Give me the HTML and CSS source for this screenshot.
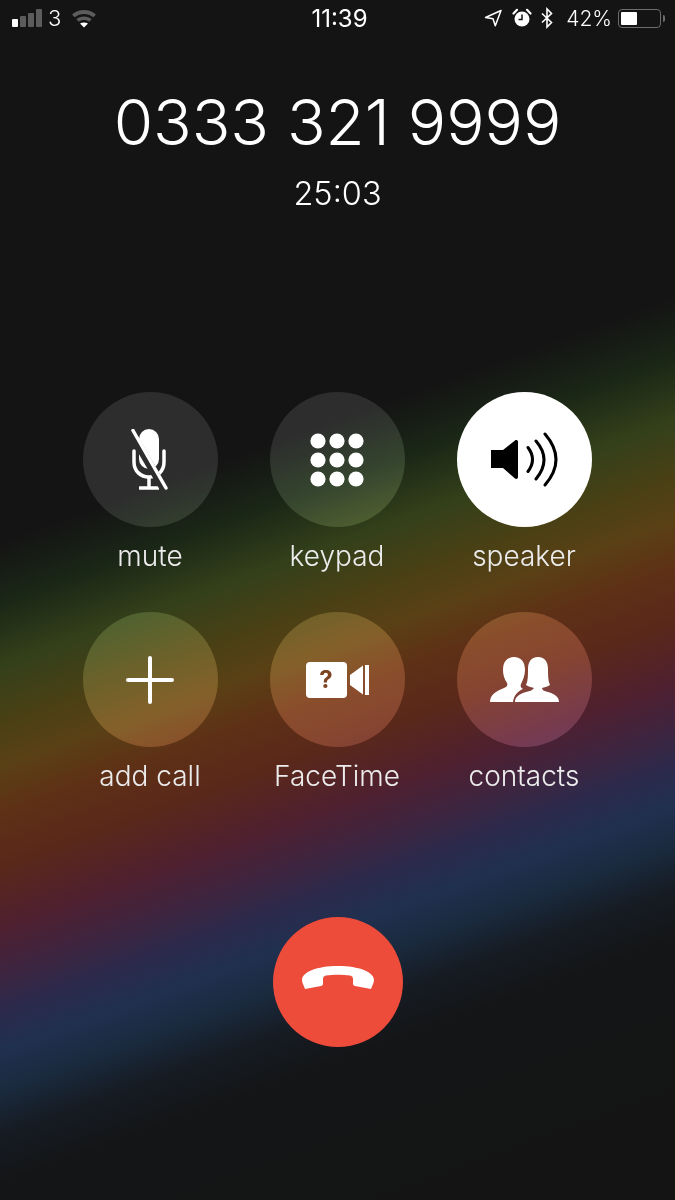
FILE: index.html
```html
<!DOCTYPE html>
<html>
<head>
  <title>Call</title>
  <link rel="stylesheet" href="styles.css">
</head>
<body>
  <div class="status-bar">
    <div class="status-left">
      <div class="signal">
        <span class="bar on b1"></span>
        <span class="bar b2"></span>
        <span class="bar b3"></span>
        <span class="bar b4"></span>
      </div>
      <span class="carrier">3</span>
      <svg class="wifi" width="26" height="20" viewBox="0 0 26 20">
        <path d="M1 6.500C8 .6 18 .6 25 6.500l-2.600 2.800C16.800 4.800 9.200 4.800 3.600 9.300z" fill="#5c5c5c"/>
        <path d="M5.300 11C9.800 7.500 16.200 7.500 20.700 11l-2.500 2.700c-3-2.200-7.400-2.200-10.400 0z" fill="#5c5c5c"/>
        <path d="M9 15.500c2.400-1.500 5.600-1.500 8 0L13 19.500z" fill="#fff"/>
      </svg>
    </div>
    <div class="status-time">11:39</div>
    <div class="status-right">
      <svg class="location" width="18" height="18" viewBox="0 0 18 18">
        <path d="M17 1.500 1.500 8.500l7.500 1.200 2.300 7z" fill="none" stroke="#fff" stroke-width="1.500" stroke-linejoin="round"/>
      </svg>
      <svg width="20" height="20" viewBox="0 0 20 20">
        <circle cx="10" cy="11" r="7.500" fill="#fff"/>
        <path d="M1.500 5.500 5 1.800M18.500 5.500 15 1.800" stroke="#fff" stroke-width="2.200" stroke-linecap="round"/>
        <path d="M10 6.500V11.500H6.500" fill="none" stroke="#141414" stroke-width="1.500"/>
      </svg>
      <svg width="14" height="22" viewBox="0 0 14 22">
        <path d="M2 6.500 11.500 15.500 7 20V2l4.500 4.500L2 15.500" fill="none" stroke="#fff" stroke-width="1.600"/>
      </svg>
      <span class="battery-pct">42%</span>
      <div class="battery">
        <div class="battery-body"><div class="battery-fill"></div></div>
        <div class="battery-tip"></div>
      </div>
    </div>
  </div>

  <div class="call-info">
    <div class="number">0333 321 9999</div>
    <div class="timer">25:03</div>
  </div>

  <div class="buttons">
    <div class="call-btn">
      <div class="circle">
        <svg width="38" height="62" viewBox="0 0 38 62">
          <mask id="mic-gap">
            <rect width="38" height="62" fill="#fff"/>
            <path d="M-1 2 33 60" stroke="#000" stroke-width="8"/>
          </mask>
          <g mask="url(#mic-gap)">
            <rect x="8" y="0" width="20" height="40" rx="10" fill="#fff"/>
            <path d="M3 22v11c0 9 6.500 15 15 15s15-6 15-15V22" fill="none" stroke="#fff" stroke-width="3.500" stroke-linecap="round"/>
            <path d="M18 48v10M8 59h20" stroke="#fff" stroke-width="3.500"/>
          </g>
          <path d="M2 1.500 35 59" stroke="#fff" stroke-width="3.500" stroke-linecap="round"/>
        </svg>
      </div>
      <div class="label">mute</div>
    </div>
    <div class="call-btn">
      <div class="circle">
        <svg width="54" height="54" viewBox="0 0 54 54" fill="#fff">
          <circle cx="8" cy="8" r="7.600"/><circle cx="27" cy="8" r="7.600"/><circle cx="46" cy="8" r="7.600"/>
          <circle cx="8" cy="27" r="7.600"/><circle cx="27" cy="27" r="7.600"/><circle cx="46" cy="27" r="7.600"/>
          <circle cx="8" cy="46" r="7.600"/><circle cx="27" cy="46" r="7.600"/><circle cx="46" cy="46" r="7.600"/>
        </svg>
      </div>
      <div class="label">keypad</div>
    </div>
    <div class="call-btn">
      <div class="circle active">
        <svg width="67" height="55" viewBox="0 0 67 55">
          <path d="M0 18h12L24 8.500c1-.8 3-.5 3 1.500v35c0 2-2 2.300-3 1.500L12 36H0z" fill="#000"/>
          <path d="M37 15.500Q46 27.500 37 39.500M45 9Q61 27.500 45 47M54 2Q76 27.500 54 53" fill="none" stroke="#000" stroke-width="3" stroke-linecap="round"/>
        </svg>
      </div>
      <div class="label">speaker</div>
    </div>
    <div class="call-btn">
      <div class="circle">
        <svg width="48" height="48" viewBox="0 0 48 48">
          <path d="M24 2v44M2 24h44" stroke="#fff" stroke-width="4" stroke-linecap="round"/>
        </svg>
      </div>
      <div class="label">add call</div>
    </div>
    <div class="call-btn">
      <div class="circle">
        <div class="facetime">
          <div class="ft-box">?</div>
          <svg width="19" height="30" viewBox="0 0 19 30">
            <path d="M0 10 13 .5v29L0 20z" fill="#fff"/>
            <rect x="15" y="0" width="4" height="30" fill="#fff"/>
          </svg>
        </div>
      </div>
      <div class="label">FaceTime</div>
    </div>
    <div class="call-btn">
      <div class="circle">
        <svg width="69" height="45" viewBox="0 0 69 45" fill="#fff">
          <path d="M24 0C31 0 35 5 35 13C35 18 33 23 31 27C30 29 31 31 33 32C28 34 24 38 23 45H0C0 38 6 34 14 31C17 30 18 28 17 26C14 22 13 17 13 13C13 5 17 0 24 0Z"/>
          <path d="M48 0C55 0 58 5 58 12C58 18 58 24 60 28C57 30 54 30 52 31C52 33 54 34 58 35C65 37 69 40 69 45H25C25 40 29 37 36 35C40 34 43 33 44 31C42 30 39 30 36 28C38 24 38 18 38 12C38 5 41 0 48 0Z"/>
        </svg>
      </div>
      <div class="label">contacts</div>
    </div>
  </div>

  <div class="end-call">
    <svg class="hangup" width="72" height="24" viewBox="0 0 72 24">
      <path d="M0 14C0 6 15 0 36 0S72 6 72 14C72 17 70 20 69 23L53 20C52 19.700 51 19 51 18V13C51 11 50 10 48 9.500C41 8.500 31 8.500 24 9.500C22 10 21 11 21 13V18C21 19 20 19.700 19 20L3 23C2 20 0 17 0 14Z" fill="#fff"/>
    </svg>
  </div>
</body>
</html>
```

FILE: styles.css
```css
html, body {
  margin: 0;
  padding: 0;
}
body {
  width: 675px;
  height: 1200px;
  overflow: hidden;
  font-family: Inter, "Liberation Sans", sans-serif;
  color: #fff;
  background: linear-gradient(160deg,
    #141414 0%, #141414 37.500%,
    #1a2616 41.600%, #33401a 46%,
    #4a4015 50%, #5a4015 53%,
    #5e3016 56.400%, #5a281a 60%,
    #4e2030 64.300%, #40243e 67%,
    #2c2a4c 70%, #20304f 72.700%,
    #1a2a3e 75.500%, #161c24 78.400%,
    #141516 82%, #141414 100%);
}
.status-bar {
  height: 36px;
  display: grid;
  grid-template-columns: 1fr auto 1fr;
  align-items: center;
  font-size: 22px;
  font-weight: 300;
}
.status-left {
  display: flex;
  align-items: center;
  padding-left: 12px;
}
.signal {
  display: flex;
  align-items: flex-end;
  gap: 2px;
  height: 18px;
}
.bar {
  width: 6px;
  background: #5c5c5c;
  border-radius: 1px;
}
.bar.on {
  background: #fff;
}
.b1 { height: 8px; }
.b2 { height: 11px; }
.b3 { height: 14px; }
.b4 { height: 18px; }
.carrier {
  margin-left: 6px;
}
.wifi {
  margin-left: 10px;
}
.status-time {
  font-size: 24px;
  font-weight: 400;
  padding-left: 4px;
}
.status-right {
  display: flex;
  align-items: center;
  justify-content: flex-end;
  gap: 8px;
  padding-right: 10px;
}
.location {
  margin-right: 2px;
}
.battery-pct {
  font-size: 21px;
  margin-left: 4px;
}
.battery {
  display: flex;
  align-items: center;
  gap: 2px;
  margin-left: -2px;
}
.battery-body {
  width: 37px;
  height: 13px;
  border: 1.500px solid #6c6c6c;
  border-radius: 4px;
  padding: 2px;
}
.battery-fill {
  width: 16px;
  height: 100%;
  background: #fff;
  border-radius: 1px;
}
.battery-tip {
  width: 2px;
  height: 7px;
  background: #6c6c6c;
  border-radius: 0 2px 2px 0;
}
.call-info {
  text-align: center;
  padding-top: 46px;
}
.number {
  font-size: 63.800px;
  font-weight: 300;
  line-height: 80px;
}
.timer {
  font-size: 32.500px;
  font-weight: 300;
  line-height: 44px;
  margin-top: 10px;
}
.buttons {
  display: grid;
  grid-template-columns: repeat(3, 135px);
  column-gap: 52px;
  row-gap: 37px;
  justify-content: center;
  margin-top: 176px;
  padding-right: 1px;
}
.call-btn {
  display: flex;
  flex-direction: column;
  align-items: center;
}
.circle {
  width: 135px;
  height: 135px;
  border-radius: 50%;
  background: rgba(255, 255, 255, 0.085);
  backdrop-filter: brightness(1.3) saturate(1.1);
  display: flex;
  align-items: center;
  justify-content: center;
}
.circle.active {
  background: #fff;
}
.label {
  margin-top: 10px;
  font-size: 28px;
  font-weight: 300;
  line-height: 38px;
  color: #ececec;
  white-space: nowrap;
}
.facetime {
  display: flex;
  align-items: center;
  gap: 3px;
}
.ft-box {
  width: 41px;
  height: 36px;
  background: #fff;
  border-radius: 4px;
  color: #7c4420;
  font-size: 24px;
  font-weight: 700;
  line-height: 36px;
  text-align: center;
}
.end-call {
  width: 130px;
  height: 130px;
  border-radius: 50%;
  background: #ee4c3b;
  margin: 122px auto 0;
  display: flex;
  align-items: center;
  justify-content: center;
}
.hangup {
  margin-bottom: 9px;
}
```
